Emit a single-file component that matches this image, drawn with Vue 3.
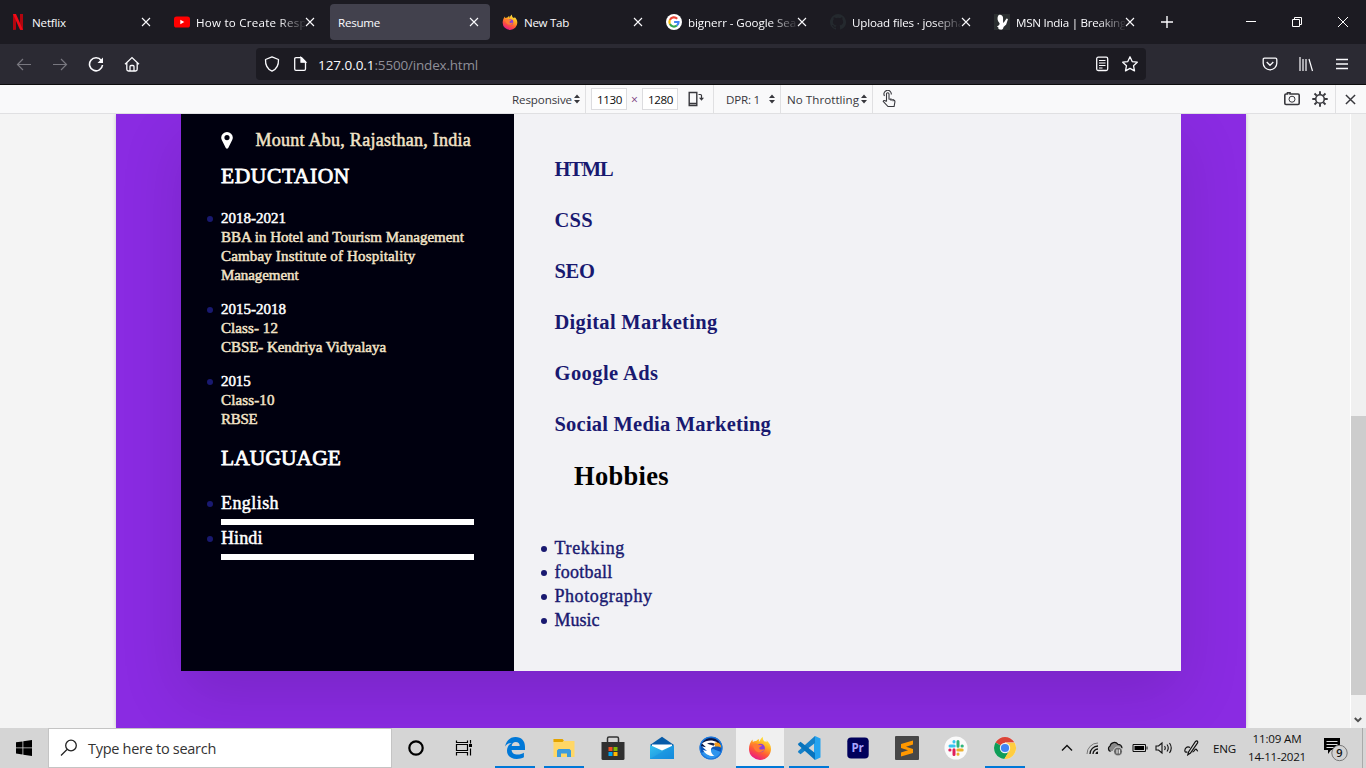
<script setup>
const tabs = [
  { icon: 'netflix', title: 'Netflix', width: 34 },
  { icon: 'youtube', title: 'How to Create Respo', width: 118 },
  { icon: '', title: 'Resume', width: 42, active: true },
  { icon: 'firefox', title: 'New Tab', width: 45 },
  { icon: 'google', title: 'bignerr - Google Sea', width: 108 },
  { icon: 'github', title: 'Upload files · josepha', width: 112 },
  { icon: 'msn', title: 'MSN India | Breaking', width: 110 },
]
const education = [
  [['2018-2021', 65], ['BBA in Hotel and Tourism Management', 243], ['Cambay Institute of Hospitality', 194.5], ['Management', 77.5]],
  [['2015-2018', 65], ['Class- 12', 57], ['CBSE- Kendriya Vidyalaya', 165]],
  [['2015', 29.5], ['Class-10', 53.5], ['RBSE', 36.5]],
]
const languages = [['English', 58], ['Hindi', 41.5]]
const skills = [['HTML', 58], ['CSS', 38.5], ['SEO', 40], ['Digital Marketing', 163], ['Google Ads', 104], ['Social Media Marketing', 216.5]]
const hobbies = [['Trekking', 70.5], ['football', 58], ['Photography', 98], ['Music', 45]]
const apps = [
  { icon: 'edge', open: true },
  { icon: 'folder', open: true },
  { icon: 'store' },
  { icon: 'mail' },
  { icon: 'eagle' },
  { icon: 'firefox', open: true, active: true },
  { icon: 'vscode', open: true },
  { icon: 'premiere' },
  { icon: 'sublime' },
  { icon: 'slack' },
  { icon: 'chrome', open: true },
]
// Spreads the letters so that a text takes the given width.
const vFit = {
  mounted(el, { value }) {
    const w = el.getBoundingClientRect().width
    const n = el.textContent.length
    el.style.letterSpacing = (value - w) / n + 'px'
  },
}
</script>

<template>
  <div class="screen">
    <svg class="sprite" aria-hidden="true">
      <defs>
        <linearGradient id="gFox" x1=".8" y1="0" x2=".3" y2="1">
          <stop offset="0" stop-color="#fff44f" /><stop offset=".35" stop-color="#ffb020" /><stop offset=".65" stop-color="#ff5a36" /><stop offset="1" stop-color="#e8158a" />
        </linearGradient>
        <linearGradient id="gEnv" x1="0" y1="0" x2="1" y2="1"><stop offset="0" stop-color="#35c1f1" /><stop offset="1" stop-color="#1387d8" /></linearGradient>
      </defs>
      <symbol id="netflix" viewBox="0 0 16 16"><path d="M3 0h3v15.700l-3 .3zM10 0h3v16l-3-.3z" fill="#b1060f" /><path d="M3 0h3l7 16-3-.3z" fill="#f20a17" /></symbol>
      <symbol id="youtube" viewBox="0 0 16 16"><rect y="2.500" width="16" height="11" rx="2.600" fill="#f00" /><path d="M6.300 5.700v4.600l4-2.300z" fill="#fff" /></symbol>
      <symbol id="firefox" viewBox="0 0 24 24">
        <path d="M15 .8c-.5 2 .2 3.400 1.600 4.800 1.400-.1 2.400.4 2.400.4l-.6-1.800c3 2.300 4.600 5.500 4.600 8.800a11 10.800 0 0 1-22 .2C1 9.200 2.300 6 4.500 3.600l.3 2.500c1-.8 2.200-1.100 3.400-1 .7-1 1.700-1.800 2.900-2.200l-.2 3C12.500 4.200 13 2 15 .8z" fill="url(#gFox)" />
        <circle cx="12.600" cy="12" r="4.300" fill="#8a3fd8" />
        <path d="M4.500 8.500c2-1.500 4.500-1 6 .2l3 .2c.700.100.3 1.500-1.500 2.100-1 .4-.8 1.700-.3 2.200 1.800 1 3.400-.4 4.700.2-1.500 3.400-6.800 3.800-9.200.8C5.500 12.500 5.500 10.500 4.500 8.500z" fill="#ff7a35" />
      </symbol>
      <symbol id="google" viewBox="0 0 16 16"><circle cx="8" cy="8" r="8" fill="#fff" /><g fill="none" stroke-width="2.200"><path d="M11.200 4.700A4.600 4.600 0 0 0 3.900 5.900" stroke="#ea4335" /><path d="M3.900 5.900a4.600 4.600 0 0 0 0 4.200" stroke="#fbbc05" /><path d="M3.900 10.100a4.600 4.600 0 0 0 7 1.400" stroke="#34a853" /><path d="M10.900 11.500c1.200-1 1.700-2.100 1.600-3.500H8.100" stroke="#4285f4" /></g></symbol>
      <symbol id="github" viewBox="0 0 16 16"><path fill="#24292e" d="M8 0a8 8 0 0 0-2.530 15.590c.4.070.550-.170.550-.380v-1.490c-2.010.37-2.530-.49-2.690-.94-.09-.23-.48-.94-.820-1.130-.28-.15-.68-.52-.01-.53.630-.01 1.080.580 1.230.820.720 1.210 1.870.870 2.330.660.070-.52.280-.87.510-1.070-1.780-.2-3.640-.89-3.640-3.950 0-.87.310-1.590.820-2.150-.08-.2-.36-1.020.080-2.120 0 0 .670-.21 2.200.820a7.600 7.600 0 0 1 4 0c1.530-1.040 2.200-.82 2.200-.82.440 1.100.160 1.920.080 2.120.51.560.820 1.270.820 2.150 0 3.070-1.870 3.750-3.650 3.950.29.250.540.730.540 1.480v2.200c0 .21.150.460.550.380A8 8 0 0 0 8 0z" /></symbol>
      <symbol id="msn" viewBox="0 0 16 16"><path fill="#2b2f30" d="M0 0h16v16H0z" /><path fill="#fff" d="M4 2C5 0 8.500.3 9 3.500c.3 2-.3 4 .5 5.500l3-4.500 1.500.5-1.800 5.500-2.700 2.500c0 2-1.500 3-3.500 2.500-1.400-.2-2.200-1.300-1.500-2L3 12.500c1.500-.7 2.800-1.700 2.600-3.200C3.500 7.300 3 4 4 2z" /></symbol>
      <symbol id="edge" viewBox="0 0 24 24"><path fill="#0078d7" d="M2 10.500C3.300 4.600 7.200 1 12.600 1 18.500 1 22 5.100 22 10.700V14H8.600c.2 3.200 2.600 4.600 6 4.600 2.500 0 4.600-.7 6.300-1.800v4.500c-2 1.200-4.400 1.700-7.200 1.700C7.800 23 4 19.800 4 14.800c0-3.500 1.800-6.300 4.700-7.900C5.700 7 3.600 8.200 2 10.500zM8.700 10h8c0-2.700-1.500-4-3.900-4-2.300 0-3.800 1.500-4.100 4z" /></symbol>
      <symbol id="folder" viewBox="0 0 24 24"><path d="M1.500 3h9l1.500 2h10.500v16h-21z" fill="#ffd766" /><path d="M1.500 3h9l1.300 1.500-1.300 1.500h-9z" fill="#e3a300" /><path d="M5 21v-6.500L6.500 13h11l1.500 1.500V21h-4v-3.500H9V21z" fill="#3c9bdc" /></symbol>
      <symbol id="store" viewBox="0 0 24 24"><path d="M6.500 7V2.500Q6.500 1 8 1h8q1.500 0 1.500 1.500V7" fill="none" stroke="#333" stroke-width="1.500" /><path d="M.5 6h23v16.500q0 1.500-1.500 1.500H2Q.5 24 .5 22.500z" fill="#303030" /><path fill="#f25022" d="M7.500 11h4v4h-4z" /><path fill="#7fba00" d="M12.500 11h4v4h-4z" /><path fill="#00a4ef" d="M7.500 16h4v4h-4z" /><path fill="#ffb900" d="M12.500 16h4v4h-4z" /></symbol>
      <symbol id="mail" viewBox="0 0 24 24"><path d="M0 9 12 .7 24 9l-12 8z" fill="#075ba8" /><path d="M2 8.500h20v3l-9 6h-2l-9-6z" fill="#fff" /><path d="M0 9l12 5.500L24 9v14H0z" fill="url(#gEnv)" /><path d="M0 23l24-14v14z" fill="#168ee0" opacity=".5" /></symbol>
      <symbol id="eagle" viewBox="0 0 24 24">
        <circle cx="12" cy="12" r="11.300" fill="#0d56b8" /><path d="M2 17A11 11 0 0 0 22 16L14 13z" fill="#2f95ee" />
        <path d="M2 10C3 4 9 1.500 14 2.500c4 .8 7 3 7.500 6L14 9l-8 2z" fill="#0a1440" />
        <path d="M3 7.500C7 4 13 3.500 18 6l-2 4.500c-3 0-4.500 1.500-4 4.500.3 2.500 2 4 3.500 5-5 .5-9.500-2-11.500-6l4 1-5-4.500 4 .8z" fill="#fff" />
        <path d="M8 7.500c3-1 6-.8 8 .5l-1.500 1.700c-2-.8-4-1.200-6.500-2.200z" fill="#13204a" />
        <path d="M15.500 7c3.500-1.300 7 .8 7 5-1.800-1.600-4-1.700-6.500-1.500z" fill="#f59a1c" />
        <circle cx="12" cy="12" r="11" fill="none" stroke="#1c78dd" stroke-width="1.200" />
      </symbol>
      <symbol id="vscode" viewBox="0 0 24 24"><path d="M18 0l5.500 2.600v18.800L18 24l-1-6V6z" fill="#25a3ef" /><path d="M18 0v7L3.500 18.200.8 16l1-1.400z" fill="#1681c9" /><path d="M.8 8l2.700-2.200L18 17v7L1.800 9.400z" fill="#0874bd" /></symbol>
      <symbol id="premiere" viewBox="0 0 24 24"><rect x="1.300" y="1.500" width="21.400" height="21" rx="3.800" fill="#00005b" /><text x="5.400" y="16" font-family="Open Sans, sans-serif" font-size="11.500" font-weight="700" fill="#a9a4ff">Pr</text></symbol>
      <symbol id="sublime" viewBox="0 0 24 24"><rect width="24" height="24" rx="1" fill="#474747" /><path d="M18 4.500v4l-7 2.300 7 2.200v4L6 20.500v-4l7-2.200-7-2.300V8z" fill="#ff9800" /></symbol>
      <symbol id="slack" viewBox="0 0 24 24"><circle cx="12" cy="12" r="11.500" fill="#fafafa" /><g stroke-width="3" stroke-linecap="round"><path d="M10 5.500V6M6 10h4.200" stroke="#36c5f0" /><path d="M14 5.500v4.800M18 10h.300" stroke="#2eb67d" /><path d="M18.200 14h-4.400M14 18v.300" stroke="#ecb22e" /><path d="M10 18.500v-4.700M5.800 14H6" stroke="#e01e5a" /></g></symbol>
      <symbol id="chrome" viewBox="0 0 24 24"><circle cx="12" cy="12" r="11" fill="#fff" /><path d="M12 12 2.500 6.500A11 11 0 0 1 21.500 6.500H12z" fill="#db4437" /><path d="M12 12 2.500 6.500A11 11 0 0 0 11.500 23l5.200-8.500z" fill="#0f9d58" /><path d="M12 6.800h9.700A11 11 0 0 1 11.300 23l5.300-9z" fill="#ffcd40" /><circle cx="12" cy="12" r="5.200" fill="#f4f4f4" /><circle cx="12" cy="12" r="4.100" fill="#4285f4" /></symbol>
      <symbol id="updown" viewBox="0 0 6 10"><path d="M0 4l3-3.500L6 4zM0 6l3 3.500L6 6z" fill="#38383d" /></symbol>
    </svg>

    <header class="tabbar">
      <div v-for="t in tabs" :key="t.title" class="tab" :class="{ active: t.active }">
        <svg v-if="t.icon" class="fav"><use :href="'#' + t.icon" /></svg>
        <div class="title" :class="{ fade: t.width > 100 }"><span v-fit="t.width" class="fit">{{ t.title }}</span></div>
        <svg class="close" viewBox="0 0 10 10"><path d="M1 1l8 8M9 1L1 9" /></svg>
      </div>
      <svg class="newtab" viewBox="0 0 14 14"><path d="M7 1v12M1 7h12" /></svg>
      <div class="winbtns">
        <svg viewBox="0 0 12 12"><path d="M1 5.500h10" /></svg>
        <svg viewBox="0 0 12 12"><path d="M1.500 3.500h7v7h-7zM3.500 3.500v-2h7v7h-2" /></svg>
        <svg viewBox="0 0 12 12"><path d="M1 1l10 10M11 1L1 11" /></svg>
      </div>
    </header>

    <nav class="navbar">
      <div class="navicons">
        <svg class="dim" viewBox="0 0 16 16"><path d="M15 8.500H1.500M7 3L1.500 8.500 7 14" /></svg>
        <svg class="dim" viewBox="0 0 16 16"><path d="M1 8.500h13.500M9 3l5.500 5.500L9 14" /></svg>
        <svg viewBox="0 0 16 16"><path d="M13.300 4.500A6.500 6.500 0 1 0 14.500 9" stroke-width="1.600" /><path d="M15 1.500V7H9.500z" fill="#fbfbfe" stroke="none" /></svg>
        <svg viewBox="0 0 16 16"><path d="M1 8.300l7-6.700 7 6.700M2.800 7v6.300q0 1.700 1.700 1.700h7q1.700 0 1.700-1.700V7M6 15v-4.500q0-1 1-1h2q1 0 1 1V15" stroke-width="1.300" /></svg>
      </div>
      <div class="urlbar">
        <svg viewBox="0 0 16 16"><path d="M8 .8l6.500 2.700c.2 5-1.500 9.500-6.500 11.700C3 13 1.300 8.500 1.500 3.500z" stroke-linejoin="round" /></svg>
        <svg class="doc" viewBox="0 0 16 16"><path d="M4 1.700h5.500l4 4V13q0 1.300-1.300 1.300H4q-1.300 0-1.300-1.300V3Q2.700 1.700 4 1.700z" /><path d="M9 1.500v4.700h4.700z" fill="#fbfbfe" /></svg>
        <div class="url"><span v-fit="56.5" class="fit">127.0.0.1</span><span v-fit="103.5" class="fit path">:5500/index.html</span></div>
        <svg class="reader" viewBox="0 0 16 16"><rect x="2.700" y="1.200" width="11" height="13.300" rx="1.500" /><path d="M5 4.500h6.500M5 7h6.500M5 9.500h6.500M5 12h3.500" stroke-width="1.100" /></svg>
        <svg viewBox="0 0 16 16"><path d="M8 .8l2.200 4.800 5.100.6-3.800 3.500 1 5.200L8 12.400l-4.500 2.500 1-5.200L.7 6.200l5.100-.6z" stroke-linejoin="round" /></svg>
      </div>
      <div class="rightnav">
        <svg viewBox="0 0 16 16"><path d="M2.500 2.200h11q1.300 0 1.300 1.300v3.800a6.800 6.500 0 0 1-13.600 0V3.500q0-1.300 1.300-1.300zM4.700 6L8 9.300 11.300 6" /></svg>
        <svg viewBox="0 0 16 16"><path d="M2 1v14M5 3v12M8 3v12M11 3l3.500 12" stroke-width="1.200" /></svg>
        <svg viewBox="0 0 16 16"><path d="M2 3.500h12M2 8h12M2 12.500h12" /></svg>
      </div>
    </nav>

    <section class="rdm">
      <div class="cell responsive"><span v-fit="60" class="fit">Responsive</span><svg class="ud"><use href="#updown" /></svg></div>
      <div class="cell size">
        <div class="num"><span v-fit="25" class="fit">1130</span></div><span class="times">×</span><div class="num"><span v-fit="25" class="fit">1280</span></div>
        <svg class="rotate" viewBox="0 0 16 16"><path d="M1.200 1.500h7.600v13H1.200zM1.200 12.500h7.600" /><path d="M10.500 3.500h2q1 0 1 1V8" stroke-width="1.200" /><path d="M11 6.700h5l-2.500 3z" fill="#38383d" stroke="none" /></svg>
      </div>
      <div class="cell dpr"><span v-fit="34" class="fit">DPR: 1</span><svg class="ud"><use href="#updown" /></svg></div>
      <div class="cell throttle"><span v-fit="72" class="fit">No Throttling</span><svg class="ud"><use href="#updown" /></svg></div>
      <svg class="touch" viewBox="0 0 16 18"><path d="M5.500 11.500V4a1.250 1.250 0 0 1 2.500 0v5l4.800 1q1.300.5 1.100 2l-.8 4.500H7l-4.800-5.200q.5-1.700 3.300.2M10 8.500v2.300M12 9v2.300M3.500 6A3.700 3.700 0 1 1 10.300 4.500" stroke-width="1.100" /></svg>
      <div class="rdmright">
        <svg class="camera" viewBox="0 0 16 16"><path d="M2 3h1.500V1.800H6V3h8q1.200 0 1.200 1.200v8.100q0 1.200-1.200 1.200H2q-1.200 0-1.200-1.200V4.200Q.8 3 2 3z" stroke-width="1.600" /><circle cx="8" cy="8.200" r="3" stroke-width="1" /></svg>
        <svg class="gear" viewBox="0 0 16 16"><circle cx="8" cy="8" r="4.300" stroke-width="1.600" /><path d="M8 .3v3M8 12.700v3M.3 8h3M12.700 8h3M2.500 2.500l2.200 2.200M11.300 11.300l2.200 2.200M13.500 2.500l-2.200 2.200M4.700 11.300l-2.200 2.200" stroke-width="1.900" /></svg>
        <div class="rdmclose"><svg viewBox="0 0 12 12"><path d="M1 1l10 10M11 1L1 11" stroke-width="1.600" /></svg></div>
      </div>
    </section>

    <main class="viewport">
      <div class="device">
        <article class="card">
          <aside class="left">
            <div class="place">
              <svg viewBox="0 0 12 17"><path fill-rule="evenodd" d="M6 0a5.800 5.600 0 0 1 5.800 5.600c0 1-.2 1.700-.6 2.500L7.200 16q-1.200 1.600-2.400 0L.8 8.100C.4 7.300.2 6.600.2 5.600A5.800 5.600 0 0 1 6 0zM6 3a2.600 2.600 0 1 0 0 5.200A2.600 2.600 0 0 0 6 3z" fill="#fff" /></svg>
              <span v-fit="215.5" class="fit">Mount Abu, Rajasthan, India</span>
            </div>
            <h2><span v-fit="129" class="fit">EDUCTAION</span></h2>
            <ul class="edu">
              <li v-for="(e, i) in education" :key="i">
                <div v-for="l in e" :key="l[0]"><span v-fit="l[1]" class="fit">{{ l[0] }}</span></div>
              </li>
            </ul>
            <h2><span v-fit="120" class="fit">LAUGUAGE</span></h2>
            <ul class="lang">
              <li v-for="l in languages" :key="l[0]"><span v-fit="l[1]" class="fit">{{ l[0] }}</span><div class="bar"></div></li>
            </ul>
          </aside>
          <section class="right">
            <div class="skills"><div v-for="s in skills" :key="s[0]"><span v-fit="s[1]" class="fit">{{ s[0] }}</span></div></div>
            <h1><span v-fit="95" class="fit">Hobbies</span></h1>
            <ul class="hobbies"><li v-for="h in hobbies" :key="h[0]"><span v-fit="h[1]" class="fit">{{ h[0] }}</span></li></ul>
          </section>
        </article>
      </div>
      <div class="scroll"><div class="thumb"></div><svg viewBox="0 0 8 6"><path d="M.8 1L4 4.200 7.200 1" /></svg></div>
    </main>

    <footer class="taskbar">
      <div class="start"><svg viewBox="0 0 16 16"><path d="M0 2.300l6.500-.9v6.100H0zM7.300 1.300L16 0v7.500H7.300zM0 8.300h6.500v6.200L0 13.600zM7.300 8.300H16V16l-8.700-1.200z" /></svg></div>
      <div class="search">
        <svg viewBox="0 0 18 18"><circle cx="11" cy="6.500" r="5.300" /><path d="M7 10.500L1 16.500" /></svg>
        <span v-fit="128" class="fit">Type here to search</span>
      </div>
      <div class="sys"><svg viewBox="0 0 18 18"><circle cx="9" cy="9" r="6.700" stroke-width="2.200" /></svg></div>
      <div class="sys"><svg viewBox="0 0 18 18"><path d="M1.500 1.500v2h11v-2M1.500 16.500v-3h11v3M1.500 5.500h11v6h-11zM15.500 1v3.500M15.500 9.500v7" stroke-width="1.200" /><path d="M14 5h3v3h-3z" fill="#000" stroke="none" /></svg></div>
      <div class="apps">
        <div v-for="a in apps" :key="a.icon" class="app" :class="{ open: a.open, active: a.active }"><svg><use :href="'#' + a.icon" /></svg></div>
      </div>
      <div class="tray">
        <svg class="chev" viewBox="0 0 16 16"><path d="M3 10.500l5-5 5 5" stroke-width="1.400" /></svg>
        <svg class="wifi" viewBox="0 0 16 16"><path d="M2 14A11 11 0 0 1 13 3" stroke="#777" /><path d="M5 14a8 8 0 0 1 8-8M8 14a5 5 0 0 1 5-5" stroke-width="1.300" /><path d="M10.500 14v-.5a2.500 2.500 0 0 1 2.500-2v2.500z" fill="#111" stroke="none" /></svg>
        <svg class="cloud" viewBox="0 0 16 16"><path d="M3.500 11.500a3 3 0 0 1-.5-5.500 4.500 4.500 0 0 1 8-1.700 4 4 0 0 1 4 4" fill="#888" stroke-width="1.200" /><circle cx="11" cy="11.500" r="4.500" fill="#666" stroke="#ddd" /><path d="M10 9.500v4M12.300 9.500v4" stroke="#fff" /></svg>
        <svg class="batt" viewBox="0 0 16 16"><path d="M1 4.500h12.500v7H1zM15 6.500v3" /><path d="M2.500 6H12v4H2.500z" fill="#000" stroke="none" /></svg>
        <svg class="vol" viewBox="0 0 18 16"><path d="M1 6h2.500L7 3v10L3.500 10H1zM9.500 6q1.500 2 0 4M12 4.500q2.500 3.500 0 7M14.500 3q3.500 5 0 10" stroke-width="1.100" /></svg>
        <svg class="pen" viewBox="0 0 18 16"><path d="M5.500 12L12.500 1.500q1.500-1.200 2.200.2.200.6-.3 1.400L7.500 13l-2.700 1.800zM7 7.500C4 6 2 8 1.800 10.500c0 2 1.500 2 2.500 1.200M9.500 12c2 .2 1.800-3 3.500-2.800 1.200.2.500 2 2 1.500" stroke-width="1.200" /></svg>
        <div class="eng"><span v-fit="23" class="fit">ENG</span></div>
        <div class="clock"><div><span v-fit="49" class="fit">11:09 AM</span></div><div><span v-fit="58" class="fit">14-11-2021</span></div></div>
        <svg class="notif" viewBox="0 0 26 26"><path d="M1 1h16v12H8l-3 4v-4H1z" fill="#000" stroke="none" /><path d="M3.500 4.500h11M3.500 7.500h11M3.500 10.500h7" stroke="#ddd" /><circle cx="16.500" cy="16" r="7.700" fill="#d2d2d2" stroke="#777" /><text x="13.300" y="20" font-family="Open Sans, sans-serif" font-size="11" font-weight="600" fill="#111" stroke="none">9</text></svg>
      </div>
    </footer>
  </div>
</template>

<style>
html, body { margin: 0; overflow: hidden; }
</style>
<style scoped>
.screen { width: 1366px; height: 768px; display: flex; flex-direction: column; overflow: hidden; font-family: "Open Sans", "Noto Sans", sans-serif; font-size: 11.6px; position: relative; }
.screen * { box-sizing: border-box; }
.sprite { position: absolute; width: 0; height: 0; }
svg { display: block; flex: none; fill: none; }
.fit { display: inline-block; white-space: nowrap; }
ul, h1, h2 { margin: 0; padding: 0; list-style: none; }

.tabbar { height: 44px; flex: none; background: #1c1b22; display: flex; align-items: center; color: #fbfbfe; }
.tab { width: 160px; height: 36px; margin: 0 2px; padding-left: 8px; display: flex; align-items: center; border-radius: 4px; flex: none; }
.tab.active { background: #42414d; }
.fav { width: 16px; height: 16px; margin-right: 6px; }
.title { flex: 1; overflow: hidden; line-height: 18px; padding-top: 1px; }
.title.fade { -webkit-mask-image: linear-gradient(to right, #000 82px, transparent 111px); mask-image: linear-gradient(to right, #000 82px, transparent 111px); }
.close { width: 10px; height: 10px; margin: 0 11px 0 0; stroke: #fbfbfe; stroke-width: 1.1; }
.newtab { width: 14px; height: 14px; margin-left: 12px; stroke: #fbfbfe; stroke-width: 1.4; }
.winbtns { margin-left: auto; display: flex; gap: 34px; padding-right: 17px; }
.winbtns svg { width: 12px; height: 12px; stroke: #fff; stroke-width: 1; }

.navbar { height: 41px; flex: none; background: #2b2a33; border-bottom: 1px solid #0c0c0d; display: flex; align-items: center; }
.navbar svg { width: 16px; height: 16px; stroke: #fbfbfe; stroke-width: 1.3; }
.navicons { display: flex; gap: 20px; padding-left: 16px; width: 256px; }
.navbar .navicons .dim { stroke: #78777f; stroke-width: 1.2; }
.urlbar { width: 890px; height: 32px; background: #1c1b22; border-radius: 4px; display: flex; align-items: center; padding: 0 8px; }
.urlbar .doc { margin-left: 12px; }
.url { margin-left: 10px; flex: 1; color: #fbfbfe; font-size: 13.5px; line-height: 20px; padding-top: 1px; display: flex; }
.url .path { color: #8f8f98; }
.reader { margin-right: 12px; }
.rightnav { display: flex; gap: 20px; margin-left: 116px; }

.rdm { height: 29px; flex: none; background: #f9f9fa; border-bottom: 1px solid #e0e0e2; display: flex; align-items: center; color: #38383d; padding-left: 506px; }
.rdm svg { stroke: #38383d; stroke-width: 1.4; }
.rdm .ud { width: 6px; height: 10px; stroke: none; }
.cell { height: 28px; display: flex; align-items: center; border-right: 1px solid #e0e0e2; }
.responsive { width: 80px; padding-left: 6px; gap: 2px; }
.size { width: 128px; padding-left: 5px; }
.num { width: 36px; height: 22px; border: 1px solid #dcdcdf; color: #0c0c0d; background: #fff; padding-left: 5px; line-height: 21px; }
.times { width: 15px; text-align: center; color: #7a3a80; font-size: 12px; padding-top: 1px; }
.rotate { width: 16px; height: 16px; margin-left: 10px; }
.dpr { width: 67px; padding-left: 12px; gap: 9px; }
.throttle { width: 92px; padding-left: 6px; gap: 2px; }
.touch { width: 16px; height: 18px; margin-left: 8px; }
.rdmright { margin-left: auto; display: flex; align-items: center; height: 28px; }
.camera, .gear { width: 16px; height: 16px; }
.gear { margin: 0 7px 0 12px; }
.rdmclose { height: 28px; border-left: 1px solid #e0e0e2; width: 31px; display: flex; align-items: center; padding-left: 9px; }
.rdmclose svg { width: 11px; height: 11px; }

.viewport { height: 614px; flex: none; background: #f4f4f4; display: flex; overflow: hidden; }
.device { width: 1130px; height: 614px; margin-left: 116px; background: #8a2be2; padding: 0 65px 57px; box-shadow: 0 0 4px rgba(0, 0, 0, .2); overflow: hidden; }
.card { height: 557px; display: flex; box-shadow: 0 25px 60px rgba(0, 0, 0, .12); font-family: "Liberation Serif", serif; }
.left { width: 333px; background: #00000f; padding: 14px 40px 0; color: #f4ead6; }
.place { display: flex; font-size: 18px; line-height: 24px; color: #f2e3c8; -webkit-text-stroke: .5px; }
.place svg { width: 12px; height: 17px; margin: 4px 22.500px 0 0; stroke: none; }
.left h2 { font-size: 21.5px; line-height: 30px; height: 30px; color: #fff; margin-top: 9px; font-weight: 400; -webkit-text-stroke: .8px; }
.edu { margin-top: 18px; font-size: 15px; line-height: 19px; color: #f2e3c8; -webkit-text-stroke: .5px; }
.edu li + li { margin-top: 15px; }
.edu li > div { height: 19px; }
.edu li > div:first-child { color: #fff; }
.left .edu + h2 { margin-top: 14px; }
li { position: relative; }
li::before { content: ""; position: absolute; width: 6px; height: 6px; border-radius: 50%; background: #191970; left: -14px; top: 7px; }
.lang { margin-top: 18px; font-size: 18px; color: #fff; line-height: 24px; -webkit-text-stroke: .5px; }
.lang li { height: 35px; }
.lang li > span { display: block; width: max-content; }
.lang li::before { top: 10px; }
.bar { height: 6px; margin-top: 4px; background: #fff; }
.right { flex: 1; background: #f2f2f5; padding: 40px 40.500px 0; color: #191970; }
.skills { display: flex; flex-direction: column; gap: 21px; font-size: 20.5px; line-height: 30px; font-weight: 700; }
.skills > div { height: 30px; }
.right h1 { font-size: 26.500px; line-height: 36px; height: 36px; margin: 19px 0 0 19.500px; color: #000; }
.hobbies { margin-top: 42px; font-size: 18px; line-height: 24px; -webkit-text-stroke: .4px; }
.hobbies li { height: 24px; }
.hobbies li::before { top: 10px; }
.scroll { width: 16px; margin-left: auto; background: #f0f0f0; display: flex; flex-direction: column; border-left: 1px solid #fff; }
.thumb { margin-top: 302px; width: 15px; height: 279px; background: #cdcdcd; }
.scroll svg { width: 8px; height: 6px; margin: 22px 0 0 3px; stroke: #505050; stroke-width: 2; }

.taskbar { height: 40px; flex: none; background: #d5d5d5; display: flex; color: #111; }
.start { width: 48px; display: flex; align-items: center; justify-content: center; }
.start svg { width: 16px; height: 16px; fill: #000; }
.search { width: 344px; border: 1px solid #c4c4c4; background: #fff; display: flex; align-items: center; font-size: 14.5px; color: #333; padding-left: 11px; gap: 10px; }
.search svg { width: 18px; height: 18px; stroke: #222; stroke-width: 1.3; }
.sys { width: 48px; display: flex; align-items: center; justify-content: center; }
.sys svg { width: 18px; height: 18px; stroke: #000; }
.apps { display: flex; gap: 1px; margin-left: 3px; }
.app { width: 48px; height: 40px; position: relative; display: flex; align-items: center; justify-content: center; }
.app svg { width: 24px; height: 24px; }
.app.active { background: #f0f0f0; }
.app.open::after { content: ""; position: absolute; left: 4px; right: 4px; bottom: 0; height: 2px; background: #0078d7; }
.app.active::after { left: 0; right: 0; }
.tray { flex: 1; display: flex; align-items: center; margin-left: 30px; border-right: 1px solid #aaa; margin-right: 3px; }
.tray svg { width: 16px; height: 16px; stroke: #111; }
.tray .wifi { margin-left: 10px; }
.tray .cloud { margin-left: 6px; }
.tray .batt { margin-left: 9px; }
.tray .vol { width: 18px; margin-left: 7px; }
.tray .pen { width: 18px; margin-left: 10px; }
.eng { margin-left: 12px; width: 35px; }
.clock { width: 58px; text-align: center; line-height: 18px; }
.clock > div { height: 18px; }
.tray .notif { width: 26px; height: 26px; margin: 4px 0 0 17px; }
</style>
